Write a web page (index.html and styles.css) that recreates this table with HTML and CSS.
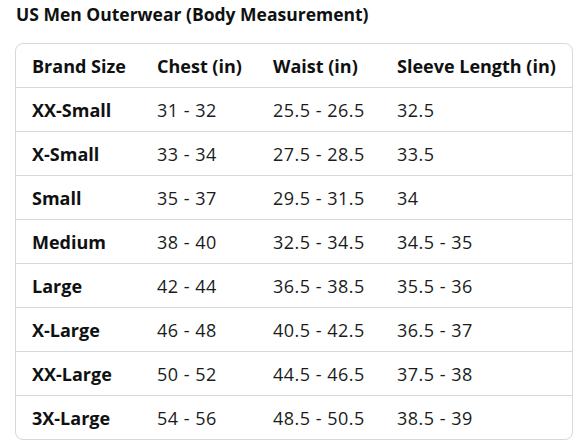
FILE: index.html
```html
<!DOCTYPE html>
<html>
<head>
<meta charset="utf-8">
<link rel="stylesheet" href="styles.css">
</head>
<body>
<h1 class="title">US Men Outerwear (Body Measurement)</h1>
<div class="box">
<table class="chart">
<thead>
<tr><th class="c1">Brand Size</th><th class="c2">Chest (in)</th><th class="c3">Waist (in)</th><th>Sleeve Length (in)</th></tr>
</thead>
<tbody>
<tr><th>XX-Small</th><td>31 - 32</td><td>25.5 - 26.5</td><td>32.5</td></tr>
<tr><th>X-Small</th><td>33 - 34</td><td>27.5 - 28.5</td><td>33.5</td></tr>
<tr><th>Small</th><td>35 - 37</td><td>29.5 - 31.5</td><td>34</td></tr>
<tr><th>Medium</th><td>38 - 40</td><td>32.5 - 34.5</td><td>34.5 - 35</td></tr>
<tr><th>Large</th><td>42 - 44</td><td>36.5 - 38.5</td><td>35.5 - 36</td></tr>
<tr><th>X-Large</th><td>46 - 48</td><td>40.5 - 42.5</td><td>36.5 - 37</td></tr>
<tr><th>XX-Large</th><td>50 - 52</td><td>44.5 - 46.5</td><td>37.5 - 38</td></tr>
<tr><th>3X-Large</th><td>54 - 56</td><td>48.5 - 50.5</td><td>38.5 - 39</td></tr>
</tbody>
</table>
</div>
</body>
</html>
```
FILE: styles.css
```css
html, body {
  margin: 0;
  padding: 0;
  background: #fff;
}
body {
  font-family: "Open Sans", "Noto Sans", sans-serif;
  color: #0f1111;
  padding: 0 15px 0 15px;
}
.title {
  font-size: 17.5px;
  font-weight: 700;
  margin: 0;
  padding: 2px 0 0 1px;
  height: 43px;
  box-sizing: border-box;
  line-height: 24px;
}
.box {
  border: 1px solid #d5d9d9;
  border-radius: 8px;
  width: 558px;
  box-sizing: border-box;
  overflow: hidden;
}
.chart {
  border-collapse: collapse;
  width: 100%;
  font-size: 18px;
}
.chart th, .chart td {
  height: 43px;
  padding: 0 0 0 16px;
  text-align: left;
  vertical-align: middle;
  white-space: nowrap;
}
.chart tbody tr th, .chart tbody tr td {
  border-top: 1px solid #d5d9d9;
}
.chart th { font-weight: 700; }
.chart td { font-weight: 400; letter-spacing: 0.5px; color: #1a1c1c; }
.c1 { width: 109px; }
.c2 { width: 100px; }
.c3 { width: 108px; }
```
